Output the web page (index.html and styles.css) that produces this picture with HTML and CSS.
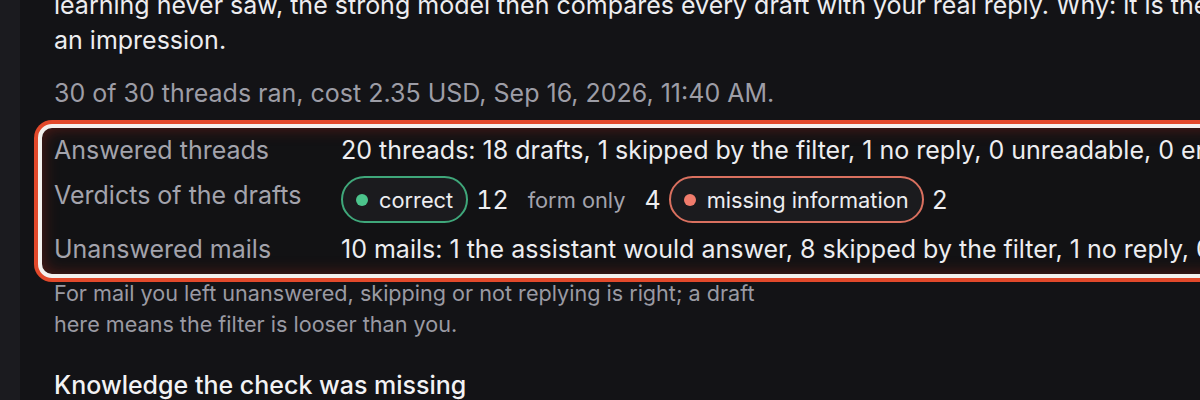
FILE: index.html
```html
<!DOCTYPE html>
<html lang="en">
<head>
<meta charset="utf-8">
<title>Check results</title>
<link rel="stylesheet" href="styles.css">
</head>
<body>
<div class="page">
  <aside class="rail"></aside>
  <main class="main">
    <p class="intro">learning never saw, the strong model then compares every draft with your real reply. Why: it is the only way to get more than<br>an impression.</p>
    <p class="meta">30 of 30 threads ran, cost 2.35 USD, Sep 16, 2026, 11:40 AM.</p>
    <section class="summary">
      <div class="label">Answered threads</div>
      <div class="value">20 threads: 18 drafts, 1 skipped by the filter, 1 no reply, 0 unreadable, 0 errors</div>
      <div class="label label-pill">Verdicts of the drafts</div>
      <div class="value verdicts">
        <span class="pill pill-good"><span class="dot"></span>correct</span>
        <span class="count">12</span>
        <span class="pill pill-plain">form only</span>
        <span class="count">4</span>
        <span class="pill pill-bad"><span class="dot"></span>missing information</span>
        <span class="count">2</span>
      </div>
      <div class="label">Unanswered mails</div>
      <div class="value">10 mails: 1 the assistant would answer, 8 skipped by the filter, 1 no reply, 0 unreadable</div>
    </section>
    <p class="note">For mail you left unanswered, skipping or not replying is right; a draft<br>here means the filter is looser than you.</p>
    <h2 class="heading">Knowledge the check was missing</h2>
  </main>
</div>
</body>
</html>
```

FILE: styles.css
```css
html, body {
  margin: 0;
  padding: 0;
  background: #131316;
  overflow: hidden;
  font-family: Inter, "Noto Sans", "Liberation Sans", sans-serif;
  color: #ededf0;
}

.page {
  display: flex;
  width: 1500px;
  height: 400px;
}

.rail {
  width: 20px;
  flex: 0 0 20px;
  background: #1b1b1f;
}

.main {
  flex: 1;
  padding-left: 18px;
  margin-top: -12px;
  display: flex;
  flex-direction: column;
}

.intro {
  margin: 0 0 0 16px;
  font-size: 25px;
  line-height: 35px;
  white-space: nowrap;
  color: #ededf0;
}

.meta {
  margin: 19px 0 0 16px;
  font-size: 25px;
  line-height: 32px;
  color: #9d9da6;
}

.summary {
  margin-top: 15px;
  width: 1400px;
  border: 4px solid #f4f1ee;
  box-shadow: 0 0 0 4px #e2492b, inset 0 0 16px rgba(170, 40, 25, 0.45);
  border-radius: 14px;
  padding: 6px 12px 9px 12px;
  display: grid;
  grid-template-columns: 287px 1fr;
  row-gap: 10px;
  background: #121214;
}

.label {
  font-size: 25px;
  line-height: 32px;
  color: #a3a3ac;
  white-space: nowrap;
}

.label-pill {
  padding-top: 3px;
}

.value {
  font-size: 25px;
  line-height: 32px;
  color: #ededf0;
  white-space: nowrap;
}

.verdicts {
  display: flex;
  align-items: center;
  gap: 8px;
}

.pill {
  display: inline-flex;
  align-items: center;
  gap: 11px;
  height: 43px;
  padding: 0 13px;
  border: 2px solid transparent;
  border-radius: 24px;
  font-size: 21.8px;
  background: #1b1b1e;
}

.pill-good {
  border-color: #3fa77a;
}

.pill-good .dot {
  background: #4cc48c;
}

.pill-bad {
  border-color: #d9705f;
}

.pill-bad .dot {
  background: #f07c6c;
}

.pill-plain {
  padding: 0 9px;
  background: transparent;
  color: #a3a3ac;
}

.dot {
  width: 12px;
  height: 12px;
  border-radius: 50%;
}

.count {
  font-size: 25px;
  font-variant-numeric: tabular-nums;
}

.note {
  margin: 0 0 0 16px;
  font-size: 21.6px;
  line-height: 31px;
  color: #9a9aa3;
}

.heading {
  margin: 30px 0 0 16px;
  font-size: 25px;
  line-height: 30px;
  font-weight: 500;
  color: #f2f2f4;
}
```
